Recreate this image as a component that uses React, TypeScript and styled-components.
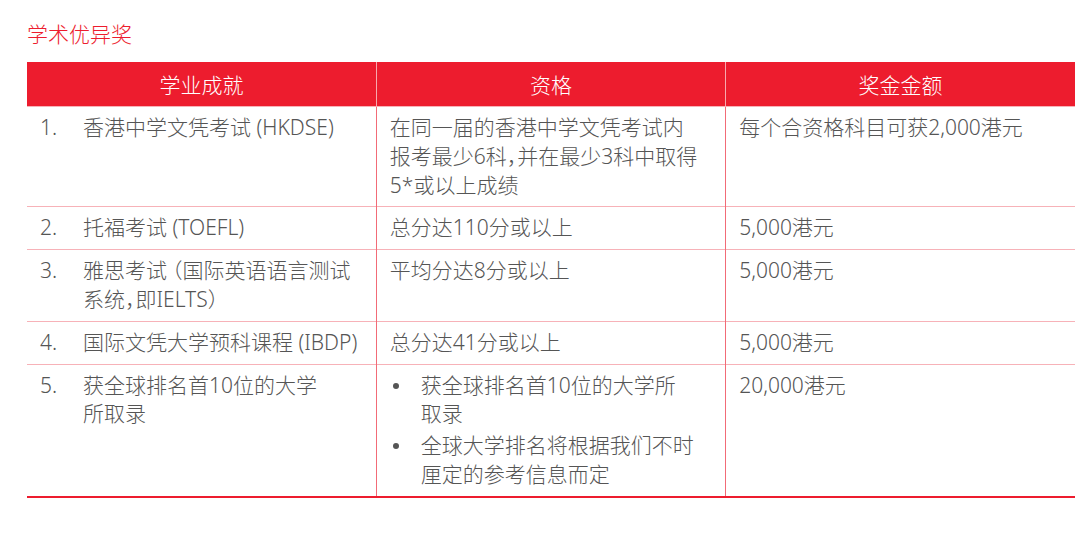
import React from 'react'
import styled, { createGlobalStyle } from 'styled-components'

const GlobalStyle = createGlobalStyle`
  html, body {
    margin: 0;
    padding: 0;
    background: #fff;
  }
  body {
    font-family: "Noto Sans", "Noto Sans CJK SC", sans-serif;
    font-weight: 300;
    font-feature-settings: "halt";
    color: #555;
  }
`

const RED = '#ed1c2e'

const Page = styled.div`
  padding: 21px 16px 0 27px;
`

const Title = styled.h3`
  margin: 0 0 15px 0;
  font-size: 21px;
  line-height: 26px;
  font-weight: 300;
  color: ${RED};
`

const Table = styled.table`
  width: 1048px;
  border-collapse: collapse;
  table-layout: fixed;
  border-bottom: 2px solid ${RED};
`

const Head = styled.th`
  background: ${RED};
  color: #fff;
  font-weight: 300;
  font-size: 21px;
  height: 44px;
  padding: 0;
  text-align: center;
  border-left: 1px solid #f7a8ae;
  &:first-child {
    border-left: none;
  }
`

const Row = styled.tr`
  border-top: 1px solid #f7b2b8;
`

const Cell = styled.td`
  vertical-align: top;
  padding: 6px 13px 7px 13px;
  font-size: 21px;
  line-height: 28.8px;
  border-left: 1px solid #f26b77;
  white-space: nowrap;
  &:first-child {
    border-left: none;
  }
`

const Numbered = styled.div`
  display: flex;
`

const Num = styled.span`
  flex: 0 0 43px;
`

const Bullets = styled.ul`
  margin: 0;
  padding: 0;
  list-style: none;
  display: flex;
  flex-direction: column;
  gap: 3px;
`

const Bullet = styled.li`
  display: flex;
  &::before {
    content: '';
    flex: 0 0 6px;
    height: 6px;
    margin: 12px 22px 0 3px;
    border-radius: 50%;
    background: #555;
  }
`

const Lines = styled.div`
  display: flex;
  flex-direction: column;
`

const Paren = styled.span`
  margin-left: 5px;
`

const lines = (...ls: React.ReactNode[]) => (
  <Lines>
    {ls.map((l, i) => (
      <span key={i}>{l}</span>
    ))}
  </Lines>
)

type Item = {
  name: React.ReactNode
  rule: React.ReactNode
  prize: string
}

const items: Item[] = [
  {
    name: '香港中学文凭考试 (HKDSE)',
    rule: lines('在同一届的香港中学文凭考试内', '报考最少6科，并在最少3科中取得', '5*或以上成绩'),
    prize: '每个合资格科目可获2,000港元',
  },
  { name: '托福考试 (TOEFL)', rule: '总分达110分或以上', prize: '5,000港元' },
  {
    name: lines(
      <>
        雅思考试<Paren>（</Paren>国际英语语言测试
      </>,
      '系统，即IELTS）'
    ),
    rule: '平均分达8分或以上',
    prize: '5,000港元',
  },
  { name: '国际文凭大学预科课程 (IBDP)', rule: '总分达41分或以上', prize: '5,000港元' },
  {
    name: lines('获全球排名首10位的大学', '所取录'),
    rule: (
      <Bullets>
        <Bullet>{lines('获全球排名首10位的大学所', '取录')}</Bullet>
        <Bullet>{lines('全球大学排名将根据我们不时', '厘定的参考信息而定')}</Bullet>
      </Bullets>
    ),
    prize: '20,000港元',
  },
]

export default function App() {
  return (
    <Page>
      <GlobalStyle />
      <Title>学术优异奖</Title>
      <Table>
        <thead>
          <tr>
            <Head>学业成就</Head>
            <Head>资格</Head>
            <Head>奖金金额</Head>
          </tr>
        </thead>
        <tbody>
          {items.map((it, i) => (
            <Row key={i}>
              <Cell>
                <Numbered>
                  <Num>{i + 1}.</Num>
                  {it.name}
                </Numbered>
              </Cell>
              <Cell>{it.rule}</Cell>
              <Cell>{it.prize}</Cell>
            </Row>
          ))}
        </tbody>
      </Table>
    </Page>
  )
}
